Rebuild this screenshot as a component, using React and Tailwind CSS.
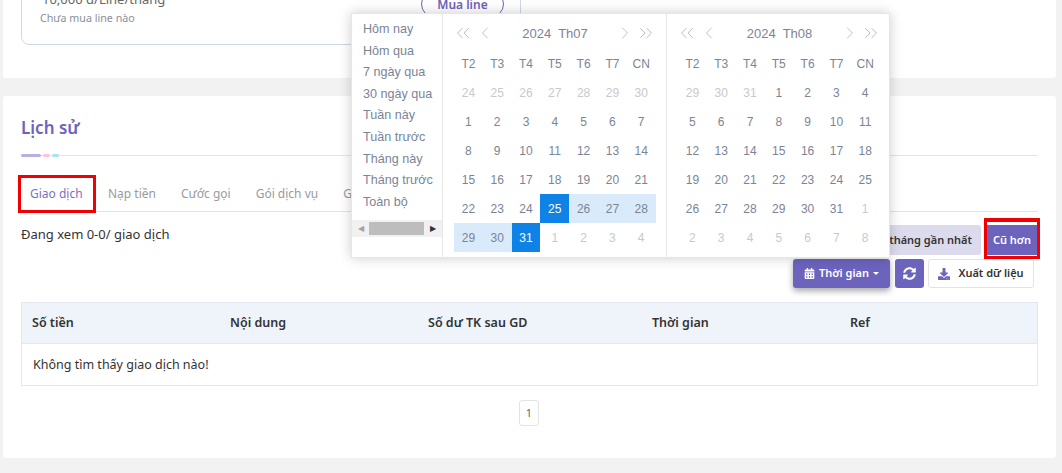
import { ChevronLeft, ChevronRight, ChevronsLeft, ChevronsRight } from 'lucide-react';
import { FaCalendarAlt, FaSyncAlt, FaDownload } from 'react-icons/fa';

const quick = ['Hôm nay', 'Hôm qua', '7 ngày qua', '30 ngày qua', 'Tuần này', 'Tuần trước', 'Tháng này', 'Tháng trước', 'Toàn bộ'];
const weekdays = ['T2', 'T3', 'T4', 'T5', 'T6', 'T7', 'CN'];
const tabs = ['Nạp tiền', 'Cước gọi', 'Gói dịch vụ', 'Gói data'];
const columns = [
  ['Số tiền', 'w-[198px]'],
  ['Nội dung', 'w-[198px]'],
  ['Số dư TK sau GD', 'w-[224px]'],
  ['Thời gian', 'w-[198px]'],
  ['Ref', ''],
];

// each cell: [day, muted]
const july = [
  [24, 1], [25, 1], [26, 1], [27, 1], [28, 1], [29, 1], [30, 1],
  ...Array.from({ length: 31 }, (_, i) => [i + 1, 0]),
  [1, 1], [2, 1], [3, 1], [4, 1],
];
const august = [
  [29, 1], [30, 1], [31, 1],
  ...Array.from({ length: 31 }, (_, i) => [i + 1, 0]),
  [1, 1], [2, 1], [3, 1], [4, 1], [5, 1], [6, 1], [7, 1], [8, 1],
];

const cellClass = (month, index, muted) => {
  if (month === 'july' && (index === 31 || index === 37)) return 'bg-[#0f82e6] text-white';
  if (month === 'july' && index > 31 && index < 37) return 'bg-[#d9ebfa] text-[#7b8496]';
  return muted ? 'text-[#c9c9c9]' : 'text-[#7b8496]';
};

const Month = ({ id, title, days, className }) => (
  <div className={`w-[224px] shrink-0 pt-[4px] ${className}`}>
    <div className="flex items-center h-[30px] px-[13px] text-[#b0b5bf]">
      <span className="w-[14px] flex justify-center"><ChevronsLeft size={22} strokeWidth={1} className="shrink-0" /></span>
      <span className="w-[10px] ml-[10px] flex justify-center"><ChevronLeft size={20} strokeWidth={1} className="shrink-0" /></span>
      <span className="flex-1 pt-[2px] text-center text-[13px] text-[#7b8496] whitespace-pre">{title}</span>
      <span className="w-[10px] flex justify-center"><ChevronRight size={20} strokeWidth={1} className="shrink-0" /></span>
      <span className="w-[14px] ml-[9px] flex justify-center"><ChevronsRight size={22} strokeWidth={1} className="shrink-0" /></span>
    </div>
    <div className="grid grid-cols-[repeat(7,28.8px)] mt-[1px] mx-[11px] text-[12px] text-center">
      {weekdays.map((day) => (
        <div key={day} className="h-[29px] leading-[31px] text-[#7b8496]">{day}</div>
      ))}
      {days.map(([day, muted], index) => (
        <div key={index} className={`h-[29px] leading-[31px] ${cellClass(id, index, muted)}`}>{day}</div>
      ))}
    </div>
  </div>
);

export default function App() {
  return (
    <div className="relative w-[1062px] h-[473px] overflow-hidden bg-[#f2f2f2] font-['Noto_Sans','Liberation_Sans',sans-serif]">
      {/* top card, mostly scrolled out of view */}
      <div className="h-[78px] ml-[3px] mr-[6px] bg-white rounded-b-[3px] overflow-hidden">
        <div className="mt-[-12px] ml-[18px] w-[500px] h-[57px] border border-[#cfd6e6] rounded-[8px] pt-[3px] pl-[18px]">
          <p className="pl-[2px] text-[13px] leading-[15px] text-[#666]">10,000 đ/Line/tháng</p>
          <p className="mt-[4px] text-[10.7px] leading-[14px] text-[#8a8f99]">Chưa mua line nào</p>
        </div>
      </div>
      <div className="absolute left-[421px] top-[-10px] w-[83px] h-[28px] border border-[#6c63bd] rounded-full text-center text-[12px] leading-[27px] font-semibold text-[#6c63bd]">Mua line</div>

      {/* history card */}
      <section className="mt-[18px] ml-[3px] mr-[6px] h-[362px] bg-white rounded-[3px] px-[18px]">
        <h2 className="pt-[20px] text-[17px] leading-[24px] font-semibold text-[#6c63bd]">Lịch sử</h2>
        <div className="relative mt-[15px] h-[1px] bg-[#e5e5e5]">
          <div className="absolute left-0 top-[-1px] flex gap-[2px]">
            <span className="w-[20px] h-[3px] rounded-full bg-[#b9afe3]" />
            <span className="w-[7px] h-[3px] rounded-full bg-[#ffc0e3]" />
            <span className="w-[7px] h-[3px] rounded-full bg-[#a5e3f5]" />
          </div>
        </div>

        <div className="mt-[19px] flex h-[37px] border-b border-[#e3e3e3] text-[12px] text-[#9a9a9a]">
          <div className="relative w-[70px] pl-[9px] pt-[10px] h-[37px] border-b border-[#6c63bd] text-[#7d70c4]">
            Giao dịch
            <span className="absolute left-[-3px] top-0 w-[78px] h-[38px] border-[3px] border-[#f00000]" />
          </div>
          {tabs.map((tab) => (
            <div key={tab} className="pl-[17px] pr-[8px] pt-[10px] whitespace-nowrap">{tab}</div>
          ))}
        </div>

        <div className="flex justify-between">
          <p className="mt-[13px] text-[13px] leading-[18px] text-[#333]">Đang xem 0-0/ giao dịch</p>
          <div className="mt-[13px] flex gap-[6px] mr-[1px]">
            <div className="h-[30px] px-[9px] bg-[#dcdbee] rounded-[3px] text-[11px] leading-[30px] font-semibold text-[#333] whitespace-nowrap">3 tháng gần nhất</div>
            <div className="relative h-[30px] w-[50px] bg-[#6c63bd] text-center text-[11px] leading-[30px] font-semibold text-white">
              Cũ hơn
              <span className="absolute left-[-3px] top-[-7px] right-[-3px] bottom-[-4px] border-[3px] border-t-[4px] border-[#f00000]" />
            </div>
          </div>
        </div>

        <div className="mt-[4px] mr-[4px] flex justify-end gap-[4px]">
          <button className="mr-[1px] flex items-center gap-[4px] w-[97px] h-[29px] justify-center bg-[#6c63bd] rounded-[3px] text-[11px] font-semibold text-white shadow-[0_3px_6px_rgba(0,0,0,0.35)]">
            <FaCalendarAlt size={11} />
            Thời gian
            <span className="border-x-[3px] border-t-[3px] border-x-transparent border-t-white" />
          </button>
          <button className="flex items-center justify-center w-[29px] h-[29px] bg-[#6c63bd] rounded-[3px] text-white">
            <FaSyncAlt size={13} />
          </button>
          <button className="flex items-center justify-center gap-[8px] w-[106px] h-[29px] border border-[#e3e3e3] rounded-[3px] text-[11px] font-semibold text-[#333]">
            <FaDownload size={12} className="text-[#6c63bd]" />
            Xuất dữ liệu
          </button>
        </div>

        <div className="mt-[14px] border border-[#e3e8f0]">
          <div className="flex items-center h-[41px] pl-[10px] bg-[#eff3fa] border-b border-[#e3e8f0] text-[12.5px] font-semibold text-[#333]">
            {columns.map(([label, width]) => (
              <div key={label} className={width}>{label}</div>
            ))}
          </div>
          <div className="h-[41px] pl-[11px] text-[12.5px] leading-[41px] text-[#333]">Không tìm thấy giao dịch nào!</div>
        </div>

        <div className="mt-[14px] flex justify-center">
          <div className="mr-[1px] w-[20px] h-[26px] border border-[#e3e3e3] rounded-[3px] text-center text-[11px] leading-[24px] text-[#666]">1</div>
        </div>
      </section>

      {/* date range picker dropdown */}
      <div className="absolute left-[351px] top-[13px] flex w-[539px] h-[245px] bg-white border border-[#e6e6e6] shadow-[0_0_12px_rgba(0,0,0,0.2)] font-['Liberation_Sans',sans-serif]">
        <div className="w-[91px] shrink-0 border-r border-[#e6e6e6]">
          <div className="pl-[11px] pt-[5px] h-[206px] text-[12.6px] leading-[21.6px] text-[#7b8496]">
            {quick.map((item) => (
              <div key={item} className="whitespace-nowrap">{item}</div>
            ))}
          </div>
          <div className="flex items-center h-[17px] bg-[#f1f1f1]">
            <span className="w-[17px] text-center text-[8px] text-[#a3a3a3]">◀</span>
            <span className="w-[55px] h-[13px] bg-[#bdbdbd]" />
            <span className="w-[18px] text-center text-[8px] text-[#333]">▶</span>
          </div>
        </div>
        <Month id="july" title="2024  Th07" days={july} className="border-r border-[#e6e6e6]" />
        <Month id="august" title="2024  Th08" days={august} />
      </div>
    </div>
  );
}
